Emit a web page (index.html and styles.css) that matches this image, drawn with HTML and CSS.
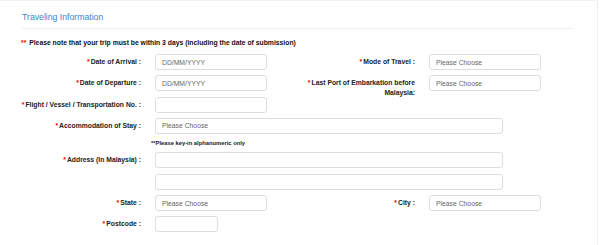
FILE: index.html
```html
<!DOCTYPE html>
<html lang="en">
<head>
  <meta charset="UTF-8">
  <title>Traveling Information</title>
  <link rel="stylesheet" href="styles.css">
</head>
<body>

  <div class="panel">
    <h2 class="panel-title">Traveling Information</h2>
    <hr class="divider">

    <p class="notice"><span class="req">**</span> Please note that your trip must be within 3 days (including the date of submission)</p>

    <div class="form-grid">
      <label class="lbl"><span class="req">*</span>Date of Arrival :</label>
      <input class="field" type="text" placeholder="DD/MM/YYYY">
      <label class="lbl"><span class="req">*</span>Mode of Travel :</label>
      <input class="field" type="text" placeholder="Please Choose">

      <label class="lbl"><span class="req">*</span>Date of Departure :</label>
      <input class="field" type="text" placeholder="DD/MM/YYYY">
      <label class="lbl wrap"><span class="req">*</span>Last Port of Embarkation before Malaysia:</label>
      <input class="field" type="text" placeholder="Please Choose">

      <label class="lbl"><span class="req">*</span>Flight / Vessel / Transportation No. :</label>
      <input class="field" type="text">
      <div class="spacer"></div>

      <label class="lbl"><span class="req">*</span>Accommodation of Stay :</label>
      <input class="field wide" type="text" placeholder="Please Choose">

      <div></div>
      <p class="hint">**Please key-in alphanumeric only</p>

      <label class="lbl"><span class="req">*</span>Address (In Malaysia) :</label>
      <input class="field wide" type="text">
      <div></div>
      <input class="field wide" type="text">

      <label class="lbl"><span class="req">*</span>State :</label>
      <input class="field" type="text" placeholder="Please Choose">
      <label class="lbl"><span class="req">*</span>City :</label>
      <input class="field" type="text" placeholder="Please Choose">

      <label class="lbl"><span class="req">*</span>Postcode :</label>
      <input class="field short" type="text">
    </div>
  </div>

</body>
</html>
```

FILE: styles.css
```css
body {
  margin: 0;
  font-family: "Liberation Sans", Arial, sans-serif;
  color: #333;
  background: #fff;
}
.panel {
  width: 598px;
  height: 245px;
  border-top: 1px solid #f2f2f2;
  border-right: 1px solid #eee;
  box-sizing: border-box;
  padding: 0 24px 0 22px;
}
.panel-title {
  margin: 0;
  padding-top: 11px;
  font-size: 8.7px;
  font-weight: normal;
  line-height: 11px;
  color: #3d85c6;
}
.divider {
  margin: 5px 0 0 0;
  border: none;
  border-top: 1px solid #eee;
}
.notice {
  margin: 9px 0 0 -1px;
  font-size: 6.8px;
  font-weight: bold;
  line-height: 9px;
  color: #111;
}
.req {
  color: #e00;
  margin-right: 1px;
}
.form-grid {
  display: grid;
  grid-template-columns: 120px 112px 134px 112px;
  column-gap: 14px;
  row-gap: 5.3px;
  margin: 7px 0 0 -1px;
}
.lbl {
  height: 16px;
  padding-top: 3px;
  box-sizing: border-box;
  font-size: 6.8px;
  font-weight: bold;
  line-height: 10px;
  text-align: right;
  color: #222;
}
.wrap {
  padding-left: 24px;
}
.field {
  height: 16px;
  box-sizing: border-box;
  border: 1px solid #ddd;
  border-radius: 3px;
  padding: 0 6px;
  font-family: inherit;
  font-size: 6.8px;
  color: #555;
  background: #fff;
}
.field::placeholder {
  color: #666;
}
.wide {
  grid-column: 2 / 5;
  width: 348px;
}
.short {
  width: 63px;
}
.spacer {
  grid-column: 3 / 5;
}
.hint {
  grid-column: 2 / 5;
  margin: 0 0 0 -4px;
  height: 8px;
  font-size: 5.8px;
  font-weight: bold;
  line-height: 8px;
  color: #222;
}
```
